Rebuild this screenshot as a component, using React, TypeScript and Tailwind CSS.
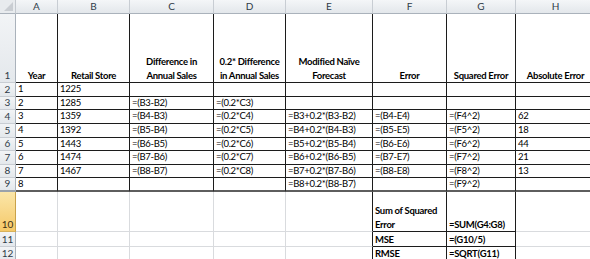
import React from "react";

type Cell = { t?: React.ReactNode; b?: boolean; c?: boolean };

const cols = ["A", "B", "C", "D", "E", "F", "G", "H"];

const H1 = (a: string, b?: string) => (
  <>
    {a}
    {b !== undefined && <br />}
    {b}
  </>
);

const rows: Cell[][] = [
  [
    { t: "Year", b: true, c: true },
    { t: "Retail Store", b: true, c: true },
    { t: H1("Difference in", "Annual Sales"), b: true, c: true },
    { t: H1("0.2* Difference", "in Annual Sales"), b: true, c: true },
    { t: H1("Modified Naïve", "Forecast"), b: true, c: true },
    { t: "Error", b: true, c: true },
    { t: "Squared Error", b: true, c: true },
    { t: "Absolute Error", b: true, c: true },
  ],
  [{ t: "1" }, { t: "1225" }, {}, {}, {}, {}, {}, {}],
  [{ t: "2" }, { t: "1285" }, { t: "=(B3-B2)" }, { t: "=(0.2*C3)" }, {}, {}, {}, {}],
  [{ t: "3" }, { t: "1359" }, { t: "=(B4-B3)" }, { t: "=(0.2*C4)" }, { t: "=B3+0.2*(B3-B2)" }, { t: "=(B4-E4)" }, { t: "=(F4^2)" }, { t: "62" }],
  [{ t: "4" }, { t: "1392" }, { t: "=(B5-B4)" }, { t: "=(0.2*C5)" }, { t: "=B4+0.2*(B4-B3)" }, { t: "=(B5-E5)" }, { t: "=(F5^2)" }, { t: "18" }],
  [{ t: "5" }, { t: "1443" }, { t: "=(B6-B5)" }, { t: "=(0.2*C6)" }, { t: "=B5+0.2*(B5-B4)" }, { t: "=(B6-E6)" }, { t: "=(F6^2)" }, { t: "44" }],
  [{ t: "6" }, { t: "1474" }, { t: "=(B7-B6)" }, { t: "=(0.2*C7)" }, { t: "=B6+0.2*(B6-B5)" }, { t: "=(B7-E7)" }, { t: "=(F7^2)" }, { t: "21" }],
  [{ t: "7" }, { t: "1467" }, { t: "=(B8-B7)" }, { t: "=(0.2*C8)" }, { t: "=B7+0.2*(B7-B6)" }, { t: "=(B8-E8)" }, { t: "=(F8^2)" }, { t: "13" }],
  [{ t: "8" }, {}, {}, {}, { t: "=B8+0.2*(B8-B7)" }, {}, { t: "=(F9^2)" }, {}],
  [{}, {}, {}, {}, {}, { t: H1("Sum of Squared", "Error"), b: true }, { t: "=SUM(G4:G8)", b: true }, {}],
  [{}, {}, {}, {}, {}, { t: "MSE", b: true }, { t: "=(G10/5)", b: true }, {}],
  [{}, {}, {}, {}, {}, { t: "RMSE", b: true }, { t: "=SQRT(G11)", b: true }, {}],
];

function rightCls(r: number, c: number) {
  if (r <= 9) return "border-r border-r-[#1c1c1c]";
  if (c === 4 || c === 5 || c === 6) return "border-r border-r-[#1c1c1c]";
  return "border-r border-r-[#d9dbde]";
}

function bottomCls(r: number, c: number) {
  if (r <= 8) return "border-b border-b-[#1c1c1c]";
  if (r === 9) return "border-b-2 border-b-[#5e5e5e]";
  if (c === 5 || c === 6) return "border-b border-b-[#1c1c1c]";
  return "border-b border-b-[#d9dbde]";
}

export default function App() {
  return (
    <div
      className="w-[590px] h-[259px] overflow-hidden bg-white text-black"
      style={{ fontFamily: "Lato, 'Liberation Sans', sans-serif" }}
    >
      <div className="grid grid-cols-[16px_42px_72px_84px_72px_87px_74px_69px_80px] grid-rows-[14px_69px_repeat(8,13.625px)_40px_15px_14px]">
        {/* corner */}
        <div className="relative bg-[#e8ebee] border-r border-b border-r-[#c3c8ce] border-b-[#aab2bb]">
          <div className="absolute right-[2px] bottom-[2px] w-0 h-0 border-l-[9px] border-l-transparent border-b-[9px] border-b-[#c9cdd2]" />
        </div>
        {cols.map((l) => (
          <div
            key={l}
            className="flex items-center justify-center bg-gradient-to-b from-[#f4f6f8] to-[#e3e7eb] border-r border-b border-r-[#c8cdd3] border-b-[#aab2bb] text-[10px] text-[#2f3b48]"
          >
            {l}
          </div>
        ))}
        {rows.map((row, ri) => {
          const r = ri + 1;
          return (
            <React.Fragment key={r}>
              <div
                className={
                  "flex items-end justify-center pb-[1px] border-r text-[10px] leading-[12px] " +
                  (r === 10
                    ? "bg-gradient-to-b from-[#fbe6a8] to-[#f5c968] border-r-[#c9a24a] text-[#3b2f12] border-b border-b-[#d8b25a]"
                    : r === 9
                    ? "bg-gradient-to-b from-[#f2f4f6] to-[#e4e8ec] border-r-[#aab2bb] text-[#2f3b48] border-b-2 border-b-[#9aa2ab]"
                    : "bg-gradient-to-b from-[#f2f4f6] to-[#e4e8ec] border-r-[#aab2bb] text-[#2f3b48] border-b border-b-[#c8cdd3]")
                }
              >
                {r}
              </div>
              {row.map((cell, ci) => (
                <div
                  key={ci}
                  className={
                    "flex items-end overflow-visible whitespace-nowrap text-[9.5px] tracking-[-0.3px] leading-[13.5px] " +
                    (cell.c ? "justify-center text-center " : "pl-[2px] ") +
                    (cell.b ? "font-bold " : "") +
                    rightCls(r, ci) +
                    " " +
                    bottomCls(r, ci)
                  }
                >
                  {cell.t !== undefined && <span>{cell.t}</span>}
                </div>
              ))}
            </React.Fragment>
          );
        })}
      </div>
    </div>
  );
}
